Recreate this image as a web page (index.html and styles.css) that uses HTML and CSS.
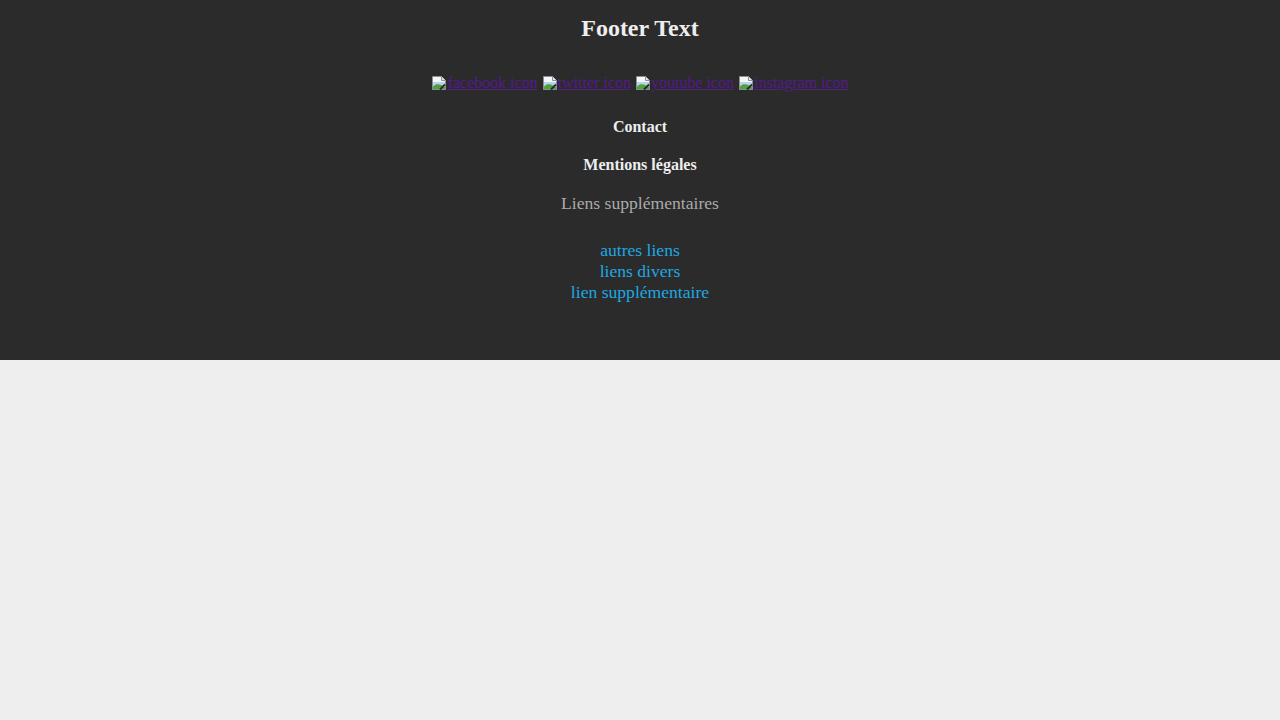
FILE: index.html
```html
<!DOCTYPE html>
<html lang="fr">
<head>
<meta charset="utf-8">
<title>Footer</title>
<link rel="stylesheet" href="styles.css">
</head>
<body>
<footer class="footer">
  <h2 class="footer-title">Footer Text</h2>
  <div class="social">
    <a href="#" class="social-link"><svg class="broken" viewBox="0 0 16 16" width="16" height="16"><path d="M1.5 1.5h9l4 4v9h-13z" fill="#f4f6f8" stroke="#8a8f96"/><path d="M10.5 1.5v4h4" fill="#dfe3e8" stroke="#8a8f96"/><path d="M2 7h12v4H2z" fill="#b9d3ef"/><path d="M2 14v-2.5c3-3 6-2.5 9-1l3 1.5V14z" fill="#4ea23a"/><path d="M14 9.5L9 14.5" stroke="#2b2b2b" stroke-width="2"/></svg>facebook icon</a>
    <a href="#" class="social-link"><svg class="broken" viewBox="0 0 16 16" width="16" height="16"><path d="M1.5 1.5h9l4 4v9h-13z" fill="#f4f6f8" stroke="#8a8f96"/><path d="M10.5 1.5v4h4" fill="#dfe3e8" stroke="#8a8f96"/><path d="M2 7h12v4H2z" fill="#b9d3ef"/><path d="M2 14v-2.5c3-3 6-2.5 9-1l3 1.5V14z" fill="#4ea23a"/><path d="M14 9.5L9 14.5" stroke="#2b2b2b" stroke-width="2"/></svg>twitter icon</a>
    <a href="#" class="social-link"><svg class="broken" viewBox="0 0 16 16" width="16" height="16"><path d="M1.5 1.5h9l4 4v9h-13z" fill="#f4f6f8" stroke="#8a8f96"/><path d="M10.5 1.5v4h4" fill="#dfe3e8" stroke="#8a8f96"/><path d="M2 7h12v4H2z" fill="#b9d3ef"/><path d="M2 14v-2.5c3-3 6-2.5 9-1l3 1.5V14z" fill="#4ea23a"/><path d="M14 9.5L9 14.5" stroke="#2b2b2b" stroke-width="2"/></svg>youtube icon</a>
    <a href="#" class="social-link"><svg class="broken" viewBox="0 0 16 16" width="16" height="16"><path d="M1.5 1.5h9l4 4v9h-13z" fill="#f4f6f8" stroke="#8a8f96"/><path d="M10.5 1.5v4h4" fill="#dfe3e8" stroke="#8a8f96"/><path d="M2 7h12v4H2z" fill="#b9d3ef"/><path d="M2 14v-2.5c3-3 6-2.5 9-1l3 1.5V14z" fill="#4ea23a"/><path d="M14 9.5L9 14.5" stroke="#2b2b2b" stroke-width="2"/></svg>instagram icon</a>
  </div>
  <p class="footer-heading contact">Contact</p>
  <p class="footer-heading mentions">Mentions légales</p>
  <p class="extra-title">Liens supplémentaires</p>
  <ul class="extra-links">
    <li><a href="#">autres liens</a></li>
    <li><a href="#">liens divers</a></li>
    <li><a href="#">lien supplémentaire</a></li>
  </ul>
</footer>
</body>
</html>
```

FILE: styles.css
```css
html, body {
  margin: 0;
  padding: 0;
  background: #eeeeee;
  font-family: "Liberation Serif", "Times New Roman", serif;
}

.footer {
  background: #2b2b2b;
  height: 360px;
  box-sizing: border-box;
  padding-top: 14px;
  text-align: center;
  color: #eeeeee;
}

.footer-title {
  margin: 0;
  font-size: 24px;
  line-height: 28px;
  font-weight: bold;
  color: #eeeeee;
}

.social {
  margin-top: 31px;
  font-size: 16px;
  line-height: 20px;
}

.social-link {
  color: #551a8b;
  text-decoration: underline;
}

.broken {
  display: inline-block;
  vertical-align: -3px;
}

.footer-heading {
  margin: 0;
  font-size: 16px;
  line-height: 20px;
  font-weight: bold;
  color: #eeeeee;
}

.contact {
  margin-top: 24px;
}

.mentions {
  margin-top: 18px;
}

.extra-title {
  margin: 17px 0 0;
  font-size: 17.6px;
  line-height: 22px;
  color: #aaaaaa;
}

.extra-links {
  list-style: none;
  margin: 26px 0 0;
  padding: 0;
  font-size: 17.6px;
  line-height: 21px;
}

.extra-links a {
  color: #1ea8e2;
  text-decoration: none;
}
```
